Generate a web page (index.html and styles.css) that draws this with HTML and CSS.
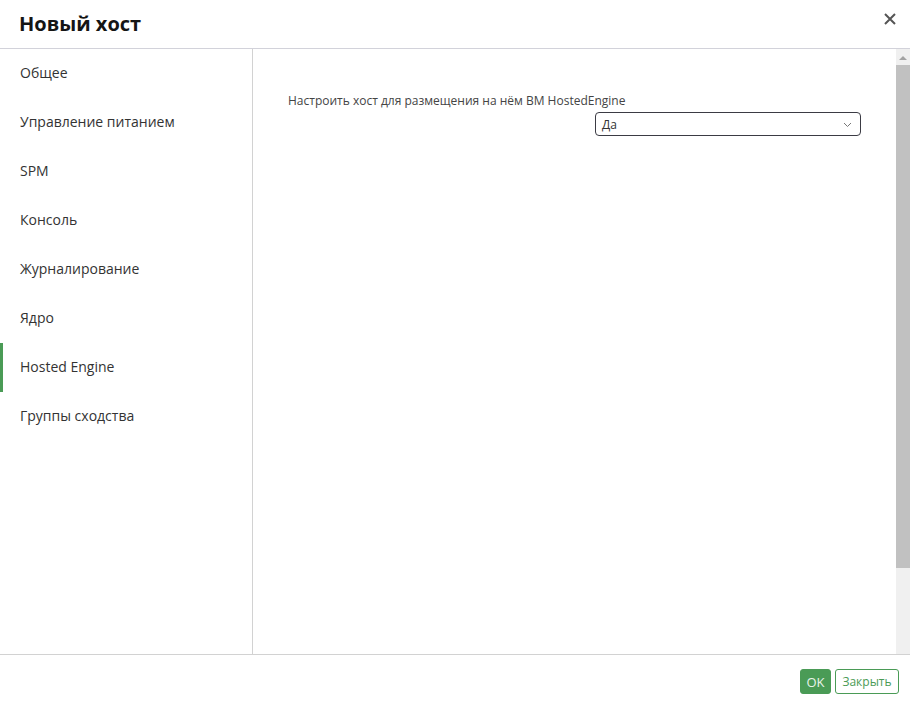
FILE: index.html
```html
<!DOCTYPE html>
<html>
<head>
  <meta charset="utf-8">
  <title>Новый хост</title>
  <link rel="stylesheet" href="styles.css">
</head>
<body>
  <div class="modal">
    <div class="modalHeader">
      <h1>Новый хост</h1>
      <button class="closeBtn" aria-label="Закрыть">
        <svg width="12" height="12" viewBox="0 0 12 12">
          <path d="M1 1 L11 11 M11 1 L1 11" stroke="#555" stroke-width="2" fill="none"/>
        </svg>
      </button>
    </div>

    <div class="modalBody">
      <ul class="tabs">
        <li>Общее</li>
        <li>Управление питанием</li>
        <li>SPM</li>
        <li>Консоль</li>
        <li>Журналирование</li>
        <li>Ядро</li>
        <li class="active">Hosted Engine</li>
        <li>Группы сходства</li>
      </ul>

      <div class="pane">
        <div class="paneContent">
          <div class="field">
            <label class="fieldLabel">Настроить хост для размещения на нём ВМ HostedEngine</label>
            <div class="select">
              <span>Да</span>
              <svg width="9" height="6" viewBox="0 0 9 6">
                <path d="M1 1 L4.5 4.5 L8 1" stroke="#777" stroke-width="1" fill="none"/>
              </svg>
            </div>
          </div>
        </div>
        <div class="scrollbar">
          <div class="scrollUp"></div>
          <div class="scrollThumb"></div>
        </div>
      </div>
    </div>

    <div class="modalFooter">
      <button class="btn btnPrimary">OK</button>
      <button class="btn btnDefault">Закрыть</button>
    </div>
  </div>
</body>
</html>
```

FILE: styles.css
```css
body {
  margin: 0;
  font-family: "Open Sans", "Noto Sans", sans-serif;
  color: #333;
  background: #fff;
}

.modal {
  width: 910px;
  height: 709px;
  display: flex;
  flex-direction: column;
  overflow: hidden;
}

.modalHeader {
  height: 49px;
  display: flex;
  justify-content: space-between;
  align-items: center;
  padding: 0 13px 0 19px;
  border-bottom: 1px solid #d2d2da;
  box-sizing: border-box;
  flex-shrink: 0;
}

.modalHeader h1 {
  margin: 0;
  font-size: 20px;
  font-weight: 700;
  color: #151515;
  position: relative;
  top: -1px;
}

.closeBtn {
  background: none;
  border: 0;
  padding: 0;
  width: 14px;
  height: 14px;
  display: flex;
  align-items: center;
  justify-content: center;
  position: relative;
  top: -5px;
}

.modalBody {
  flex: 1;
  display: flex;
  min-height: 0;
  border-bottom: 1px solid #d2d2d2;
}

.tabs {
  list-style: none;
  margin: 0;
  padding: 0;
  width: 252px;
  border-right: 1px solid #d2d2d2;
}

.tabs li {
  height: 49px;
  line-height: 47px;
  padding: 0 0 2px 20px;
  box-sizing: border-box;
  font-size: 14px;
  color: #333;
}

/* selected tab gets the green marker on the left */
.tabs li.active {
  box-shadow: inset 3px 0 0 #4a9b56;
}

.pane {
  flex: 1;
  display: flex;
}

.paneContent {
  flex: 1;
  padding: 43px 35px 0 35px;
}

.field {
  width: 573px;
}

.fieldLabel {
  display: block;
  font-size: 12px;
  color: #444;
  line-height: 18px;
}

.select {
  margin: 2px 0 0 307px;
  height: 24px;
  border: 1px solid #3b3b44;
  border-radius: 4px;
  box-sizing: border-box;
  display: flex;
  align-items: center;
  justify-content: space-between;
  padding: 0 8px 0 6px;
  font-size: 12px;
  color: #333;
}

.select svg {
  margin-top: 1px;
}

.scrollbar {
  width: 14px;
  background: #f0f0f0;
  display: flex;
  flex-direction: column;
  align-items: center;
}

.scrollUp {
  margin-top: 7px;
  width: 0;
  height: 0;
  border-left: 4px solid transparent;
  border-right: 4px solid transparent;
  border-bottom: 4px solid #a3a3a3;
}

.scrollThumb {
  margin-top: 5px;
  width: 14px;
  height: 503px;
  background: #c1c1c1;
}

.modalFooter {
  height: 54px;
  display: flex;
  justify-content: flex-end;
  align-items: flex-start;
  padding: 14px 11px 0 0;
  box-sizing: border-box;
  gap: 4px;
  flex-shrink: 0;
}

.btn {
  font-family: "Open Sans", "Noto Sans", sans-serif;
  font-size: 12px;
  height: 25px;
  border-radius: 3px;
  padding: 0;
  cursor: pointer;
}

.btnPrimary {
  background: #4a9b56;
  color: #e8f3ea;
  border: 1px solid #4a9b56;
  width: 31px;
  font-size: 13px;
}

.btnDefault {
  background: #fff;
  color: #4a9b56;
  border: 1px solid #4a9b56;
  width: 64px;
}
```
